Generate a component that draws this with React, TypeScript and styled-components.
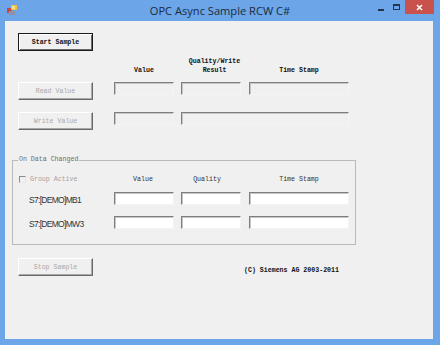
import styled, { createGlobalStyle } from 'styled-components'

const Global = createGlobalStyle`
  html, body { margin: 0; padding: 0; background: #6ca5e8; }
  * { box-sizing: border-box; }
`

const MONO = `"Liberation Mono", "DejaVu Sans Mono", monospace`

const Frame = styled.div`
  width: 440px;
  height: 345px;
  background: #6ca5e8;
  display: flex;
  flex-direction: column;
`

const TitleBar = styled.div`
  height: 21px;
  display: grid;
  grid-template-columns: 1fr auto 1fr;
  align-items: start;
`

const AppIcon = styled.svg`
  margin: 5px 0 0 7px;
  display: block;
`

const Title = styled.div`
  font-family: "Open Sans", "Noto Sans", sans-serif;
  font-size: 11.1px;
  line-height: 21px;
  color: #1c2b3d;
  white-space: nowrap;
`

const Controls = styled.div`
  display: flex;
  justify-content: flex-end;
  align-items: flex-start;
  padding-right: 6px;
`

const MinGlyph = styled.span`
  width: 6px;
  height: 2px;
  margin: 9px 9px 0 0;
  background: #23354d;
`

const MaxGlyph = styled.span`
  width: 7px;
  height: 6px;
  margin: 4px 5px 0 0;
  border: 1px solid #23354d;
  border-top-width: 2px;
`

const Close = styled.span`
  width: 29px;
  height: 14px;
  background: #c9524d;
  display: flex;
  align-items: center;
  justify-content: center;
`

const Client = styled.div`
  flex: 1;
  margin: 0 7px 6px 5px;
  background: #f0f0f0;
  padding-top: 12px;
  display: flex;
  flex-direction: column;
  align-items: flex-start;
`

const Button = styled.div<{ $default?: boolean; $disabled?: boolean }>`
  width: 75px;
  height: 18px;
  display: flex;
  align-items: center;
  justify-content: center;
  font-family: ${MONO};
  font-size: 6.6px;
  font-weight: ${p => (p.$disabled ? 'normal' : 'bold')};
  color: ${p => (p.$disabled ? '#a9a9a9' : '#111')};
  background: #f0f0f0;
  border: 1px solid;
  border-color: ${p => (p.$default ? '#1a1a1a' : '#ffffff #6a6a6a #6a6a6a #ffffff')};
  box-shadow: ${p =>
    p.$default
      ? 'inset 1px 1px 0 #ffffff, inset -1px -1px 0 #6a6a6a'
      : 'inset -1px -1px 0 #a8a8a8'};
`

const Grid = styled.div<{ $first: number }>`
  display: grid;
  grid-template-columns: ${p => p.$first}px 67px 68px 100px;
  align-items: start;
`

const TopSection = styled.div`
  margin-left: 13px;
  display: flex;
  flex-direction: column;
`

const HeadRow = styled(Grid)`
  margin-top: 6px;
  align-items: end;
`

const Head = styled.div<{ $w: number; $bold?: boolean }>`
  width: ${p => p.$w}px;
  text-align: center;
  font-family: ${MONO};
  font-size: 6.6px;
  line-height: 9px;
  font-weight: ${p => (p.$bold ? 'bold' : 'normal')};
  color: ${p => (p.$bold ? '#111' : '#333')};
`

const Field = styled.div<{ $w: number; $white?: boolean }>`
  width: ${p => p.$w}px;
  height: 13px;
  background: ${p => (p.$white ? '#ffffff' : '#f0f0f0')};
  border: 1px solid;
  border-color: #7e7e7e #f4f4f4 #f4f4f4 #7e7e7e;
  box-shadow: inset 1px 1px 0 #c6c6c6;
`

const Group = styled.fieldset`
  margin: 26px 0 0 7px;
  width: 344px;
  padding: 9px 0 15px 0;
  border: 1px solid #b9b9b9;
  display: flex;
  flex-direction: column;
  min-inline-size: 0;
`

const Legend = styled.legend`
  margin-left: 5px;
  padding: 0 1px;
  font-family: ${MONO};
  font-size: 6.6px;
  line-height: 8px;
  color: #6e6e6e;
`

const GroupRow = styled(Grid)<{ $gap: number }>`
  margin-top: ${p => p.$gap}px;
  height: 13px;
  align-items: center;
`

const CheckLabel = styled.label`
  display: flex;
  align-items: center;
  gap: 4px;
  padding-left: 6px;
  font-family: ${MONO};
  font-size: 6.6px;
  color: #a3a3a3;
`

const CheckBox = styled.span`
  width: 7px;
  height: 7px;
  border: 1px solid;
  border-color: #8c8c8c #e8e8e8 #e8e8e8 #8c8c8c;
  background: #f0f0f0;
`

const ItemName = styled.div`
  padding: 2px 0 0 16px;
  font-family: "Liberation Sans", Arial, sans-serif;
  font-size: 8.5px;
  letter-spacing: -0.7px;
  color: #333;
  white-space: nowrap;
`

const Footer = styled.div`
  margin: 13px 0 0 13px;
  display: flex;
  align-items: flex-end;
  gap: 151px;
`

const Copyright = styled.div`
  font-family: ${MONO};
  font-size: 6.6px;
  font-weight: bold;
  line-height: 9px;
  margin-bottom: 1px;
  color: #111;
  white-space: nowrap;
`

const items = ['S7:[DEMO]MB1', 'S7:[DEMO]MW3']

export default function App() {
  return (
    <Frame>
      <Global />
      <TitleBar>
        <AppIcon width="11" height="10" viewBox="0 0 11 10">
          <rect x="0" y="3" width="5" height="5" fill="#c9463f" />
          <rect x="4" y="0" width="6" height="5" fill="#f2c03e" />
          <rect x="2" y="6" width="6" height="4" fill="#8c93a6" />
          <rect x="5" y="1" width="3" height="3" fill="#f7e08a" />
        </AppIcon>
        <Title>OPC Async Sample RCW C#</Title>
        <Controls>
          <MinGlyph />
          <MaxGlyph />
          <Close>
            <svg width="7" height="7" viewBox="0 0 7 7">
              <path d="M1 1 L6 6 M6 1 L1 6" stroke="#fff" strokeWidth="1.5" />
            </svg>
          </Close>
        </Controls>
      </TitleBar>

      <Client>
        <TopSection>
          <Button $default>Start Sample</Button>
          <HeadRow $first={96}>
            <span />
            <Head $w={60} $bold>Value</Head>
            <Head $w={67} $bold>Quality/Write<br />Result</Head>
            <Head $w={100} $bold>Time Stamp</Head>
          </HeadRow>
          <Grid $first={96} style={{ marginTop: 7 }}>
            <Button $disabled>Read Value</Button>
            <Field $w={60} />
            <Field $w={60} />
            <Field $w={100} />
          </Grid>
          <Grid $first={96} style={{ marginTop: 12 }}>
            <Button $disabled>Write Value</Button>
            <Field $w={60} />
            <div style={{ gridColumn: '3 / 5' }}>
              <Field $w={168} />
            </div>
          </Grid>
        </TopSection>

        <Group>
          <Legend>On Data Changed</Legend>
          <GroupRow $first={101} $gap={0}>
            <CheckLabel>
              <CheckBox />
              Group Active
            </CheckLabel>
            <Head $w={58}>Value</Head>
            <Head $w={52}>Quality</Head>
            <Head $w={100}>Time Stamp</Head>
          </GroupRow>
          {items.map((name, i) => (
            <GroupRow key={name} $first={101} $gap={i === 0 ? 6 : 11}>
              <ItemName>{name}</ItemName>
              <Field $w={60} $white />
              <Field $w={60} $white />
              <Field $w={100} $white />
            </GroupRow>
          ))}
        </Group>

        <Footer>
          <Button $disabled>Stop Sample</Button>
          <Copyright>(C) Siemens AG 2003-2011</Copyright>
        </Footer>
      </Client>
    </Frame>
  )
}
